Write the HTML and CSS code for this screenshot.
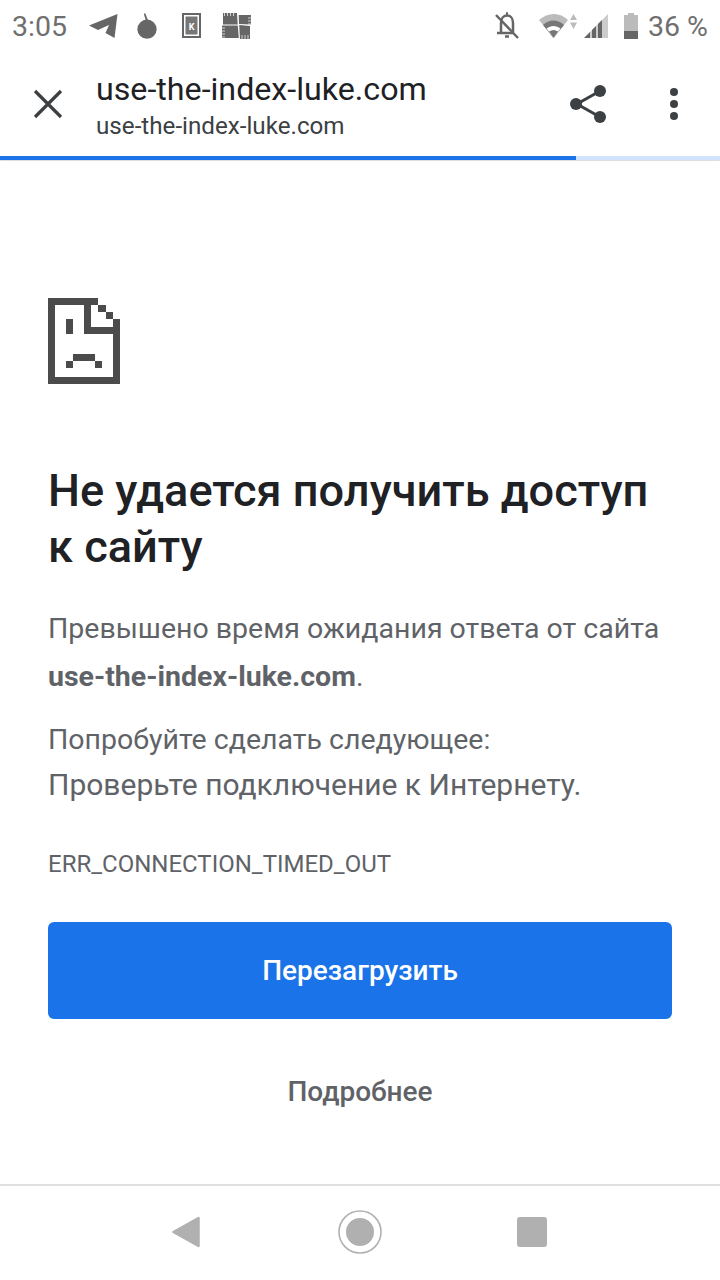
FILE: index.html
```html
<!DOCTYPE html>
<html lang="ru">
<head>
<meta charset="utf-8">
<title>use-the-index-luke.com</title>
<link rel="stylesheet" href="styles.css">
</head>
<body>
<div class="screen">
  <header class="status">
    <span class="clock">3:05</span>
    <div class="status-left">
      <svg class="ico tg" viewBox="0 0 30 26"><path d="M0 12.500 28.500 1 25.500 25 16.500 20 20 12 9 17Z" fill="#666"/></svg>
      <svg class="ico bomb" viewBox="0 0 24 30"><circle cx="12" cy="18.500" r="10.500" fill="#666"/><path d="M10.500 8.500 8.500 1.500 10 1 13 8.500Z" fill="#666"/></svg>
      <svg class="ico card" viewBox="0 0 20 26"><rect x="1" y="1" width="17" height="23" fill="none" stroke="#666" stroke-width="2"/><rect x="3.500" y="3.500" width="12" height="18" fill="#777"/><text x="9.500" y="16.500" class="card-k">K</text></svg>
      <svg class="ico quilt" viewBox="0 0 30 26"><path d="M1 0H15L15.700 11.500H1ZM16.700 2H29V11.500L17 11ZM0 12.500H15.800L16.800 25H0ZM17.200 12 28 13V26H18Z" fill="#666"/><path d="M2.500 0V3M5.500 0V3M8.500 0V3M11.500 0V3M0 15H3M0 18H3M0 21H3M0 24H3M26 22V26M23 22V26M20 22V26M26 5H30M26 8H30M26 11H30" stroke="#fff" stroke-width=".7"/></svg>
    </div>
    <div class="status-right">
      <svg class="ico bell" viewBox="0 0 26 28"><path d="M7 20V11C7 6 10 3.500 13 3.500S19 6 19 11V20M3 21H19M11 24.500H15M12 1.500H14" fill="none" stroke="#666" stroke-width="2.500"/><path d="M2 3 24 26" stroke="#666" stroke-width="2.500"/></svg>
      <svg class="ico wifi" viewBox="0 0 40 26"><path d="M0 7C9-1 21-1 29 7L14.500 25Z" fill="#bbb"/><path d="M4 12C10 6 19 6 25 12L14.500 25Z" fill="#777"/><path d="M7.500 15.500C12 12 17 12 21.500 15.500L14.500 25Z" fill="#fff"/><path d="M10 18.500C13 16.500 16 16.500 19 18.500L14.500 25Z" fill="#777"/><path d="M31 7 34.500 1 38 7ZM31 9.500 34.500 16 38 9.500Z" fill="#bbb"/></svg>
      <svg class="ico signal" viewBox="0 0 24 24"><path d="M0 24 24 0V24Z" fill="#ccc"/><path d="M0 24 6 18V24ZM8 24V16L12 12V24ZM14 24V10L18 6V24Z" fill="#666"/></svg>
      <svg class="ico batt" viewBox="0 0 14 26"><path d="M4 0H10V2H14V26H0V2H4Z" fill="#bbb"/><rect y="18" width="14" height="8" fill="#666"/></svg>
      <span class="pct">36 %</span>
    </div>
  </header>
  <div class="toolbar">
    <button class="tool close" aria-label="Закрыть">
      <svg viewBox="0 0 30 30"><path d="M2 2 28 28M28 2 2 28" stroke="#3c4043" stroke-width="3.200" fill="none"/></svg>
    </button>
    <div class="titles">
      <div class="title">use-the-index-luke.com</div>
      <div class="url">use-the-index-luke.com</div>
    </div>
    <button class="tool share" aria-label="Поделиться">
      <svg viewBox="0 0 38 40"><path d="M30 7 7 20 30 33" fill="none" stroke="#3c4043" stroke-width="3"/><circle cx="30" cy="7" r="6" fill="#3c4043"/><circle cx="6" cy="20" r="6" fill="#3c4043"/><circle cx="30" cy="33" r="6" fill="#3c4043"/></svg>
    </button>
    <button class="tool more" aria-label="Меню">
      <svg viewBox="0 0 8 32"><circle cx="4" cy="4" r="4" fill="#3c4043"/><circle cx="4" cy="16" r="4" fill="#3c4043"/><circle cx="4" cy="28" r="4" fill="#3c4043"/></svg>
    </button>
  </div>
  <div class="progress"><div class="progress-fill"></div></div>
  <main class="content">
    <svg class="sad" viewBox="0 0 10 12" shape-rendering="crispEdges" fill="#4b4b4b">
      <path d="M0 0H7V1H6V4H9V3H10V12H0ZM1 1V11H9V5H5V1Z" fill-rule="evenodd"/>
      <rect x="7" y="1" width="1" height="1"/><rect x="8" y="2" width="1" height="1"/>
      <rect x="2.500" y="3" width="1" height="2"/>
      <rect x="3.500" y="7.800" width="3" height="1"/><rect x="2.500" y="8.800" width="1" height="1"/><rect x="6.500" y="8.800" width="1" height="1"/>
    </svg>
    <h1>Не удается получить доступ к&nbsp;сайту</h1>
    <p class="text first">Превышено время ожидания ответа от сайта <b>use-the-index-luke.com</b>.</p>
    <p class="text try">Попробуйте сделать следующее:</p>
    <p class="text check">Проверьте подключение к Интернету.</p>
    <p class="code">ERR_CONNECTION_TIMED_OUT</p>
    <button class="reload">Перезагрузить</button>
    <button class="details">Подробнее</button>
  </main>
  <nav class="nav">
    <svg class="nav-back" viewBox="0 0 28 32"><path d="M26.500 2 1.500 16 26.500 30Z" fill="#b0b0b0" stroke="#b0b0b0" stroke-width="2.500" stroke-linejoin="round"/></svg>
    <svg class="nav-home" viewBox="0 0 44 44"><circle cx="22" cy="22" r="21" fill="none" stroke="#b0b0b0" stroke-width="1.600"/><circle cx="22" cy="22" r="14" fill="#b0b0b0"/></svg>
    <div class="nav-recent"></div>
  </nav>
</div>
</body>
</html>
```
FILE: styles.css
```css
* { box-sizing: border-box; }
html, body { margin: 0; padding: 0; background: #fff; }
body { font-family: Roboto, "Noto Sans", sans-serif; }
.screen { width: 720px; height: 1280px; display: flex; flex-direction: column; overflow: hidden; }

.status { height: 52px; display: flex; align-items: center; padding: 0 12px; color: #6f6f6f; flex: none; }
.clock { font-size: 28.500px; width: 77px; }
.status-left { display: flex; align-items: center; }
.status-right { margin-left: auto; display: flex; align-items: center; }
.ico { display: block; flex: none; }
.tg { width: 30px; height: 26px; }
.bomb { width: 22px; height: 28px; margin-left: 17px; }
.card { width: 20px; height: 26px; margin-left: 24px; }
.card-k { font: 700 9px Roboto, sans-serif; fill: #fff; text-anchor: middle; }
.quilt { width: 30px; height: 26px; margin-left: 20px; }
.bell { width: 26px; height: 28px; }
.wifi { width: 40px; height: 26px; margin-left: 19px; }
.signal { width: 24px; height: 24px; margin-left: 5px; }
.batt { width: 14px; height: 26px; margin-left: 16px; }
.pct { font-size: 28.500px; margin-left: 10px; }

.toolbar { height: 104px; display: flex; align-items: center; flex: none; }
.tool { border: 0; background: none; padding: 0; display: block; flex: none; }
.tool svg { display: block; width: 100%; height: 100%; }
.close { width: 30px; height: 30px; margin-left: 33px; }
.titles { margin-left: 33px; padding-top: 6px; flex: 1; color: #202124; }
.title { font-size: 32.200px; line-height: 38px; }
.url { font-size: 24.200px; line-height: 36px; color: #3c4043; }
.share { width: 38px; height: 40px; margin-right: 62px; }
.more { width: 8px; height: 32px; margin-right: 42px; }

.progress { height: 4px; background: #d2e3fc; flex: none; box-shadow: 0 1px 1px rgba(0, 0, 0, .14); }
.progress-fill { width: 576px; height: 100%; background: #1a73e8; }

.content { flex: 1; padding: 137px 48px 0; display: flex; flex-direction: column; align-items: stretch; min-height: 0; }
.sad { width: 72px; height: 88px; display: block; }
h1 { margin: 78px 0 0; font-size: 45.100px; line-height: 56px; font-weight: 500; color: #202124; }
.text { margin: 0; font-size: 28.500px; line-height: 48px; color: #5f6368; }
.text b { font-weight: 700; }
.first { margin-top: 30px; }
.try { margin-top: 15px; }
.check { line-height: 42px; font-size: 30px; }
.code { margin: 43px 0 0; font-size: 24px; line-height: 30px; color: #5f6368; }
.reload { margin-top: 43px; height: 97px; border: 0; border-radius: 6px; background: #1a73e8; color: #fff; font: 500 28px Roboto, sans-serif; }
.details { margin-top: 47px; border: 0; background: none; padding: 0; height: 50px; color: #5f6368; font: 500 28px Roboto, sans-serif; }

.nav { height: 96px; flex: none; border-top: 2px solid #e0e0e0; padding-bottom: 3px; display: flex; align-items: center; justify-content: center; }
.nav-back { width: 28px; height: 32px; margin-right: 138px; margin-left: -2px; }
.nav-home { width: 44px; height: 44px; }
.nav-recent { width: 30px; height: 30px; border-radius: 3px; background: #b0b0b0; margin-left: 135px; }
```
